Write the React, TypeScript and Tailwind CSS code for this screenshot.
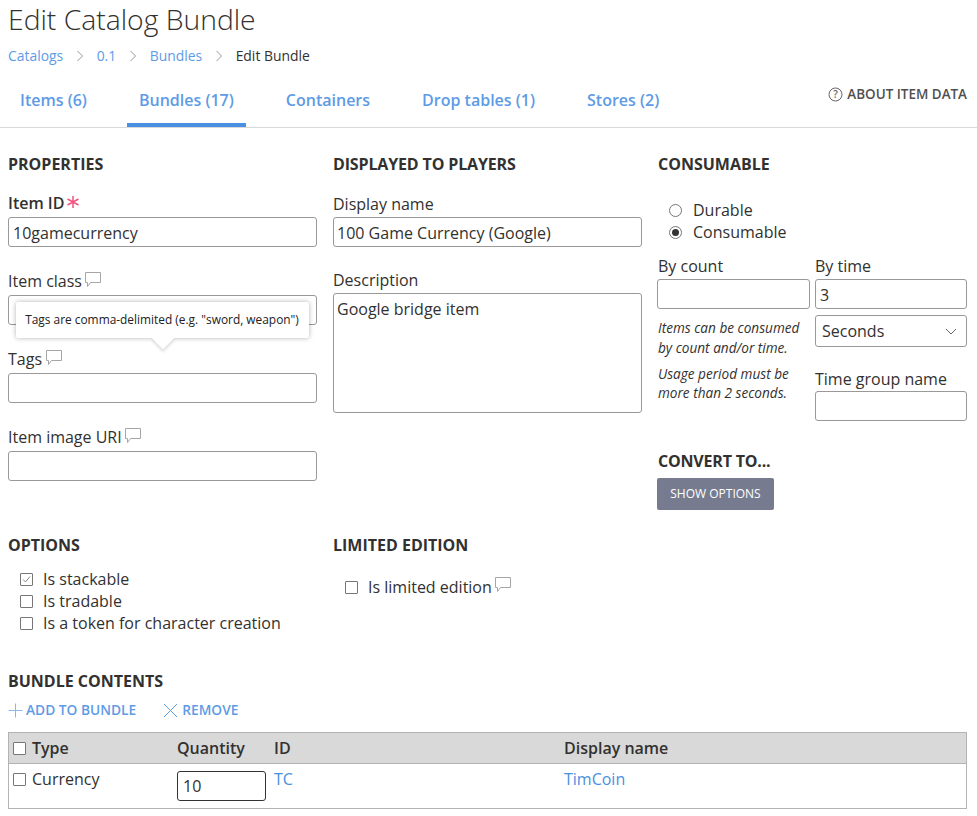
import React from "react";

const Bubble = () => (
  <svg width="17" height="16" viewBox="0 0 17 16" className="inline-block shrink-0" fill="none">
    <path d="M0.5 0.5 H15.5 V10.5 H5.5 L2.5 14.5 L2.5 10.5 H0.5 Z" stroke="#a6a6a6" strokeWidth="1" />
  </svg>
);

const Star = () => (
  <svg width="12" height="12" viewBox="0 0 12 12" className="shrink-0 -ml-[1px] mb-[3px]" fill="none">
    <path d="M6 0 V12 M0.5 3 L11.5 9 M11.5 3 L0.5 9" stroke="#f4547e" strokeWidth="1.5" />
  </svg>
);

const Box = ({ checked }: { checked?: boolean }) => (
  <span className="relative block w-[13px] h-[13px] border border-[#767676] rounded-[1px] bg-white shrink-0">
    {checked && (
      <svg width="11" height="11" viewBox="0 0 11 11" className="absolute left-0 top-0" fill="none">
        <path d="M2 5.5 L4.5 8 L9 2.5" stroke="#8a8a8a" strokeWidth="1" />
      </svg>
    )}
  </span>
);

const Radio = ({ checked }: { checked?: boolean }) => (
  <span className="flex items-center justify-center w-[13px] h-[13px] rounded-full border border-[#767676] bg-white shrink-0">
    {checked && <span className="block w-[7px] h-[7px] rounded-full bg-[#333]" />}
  </span>
);

const Input = ({ value, className = "" }: { value?: string; className?: string }) => (
  <div className={`h-[30px] border border-[#999] rounded-[3px] bg-white px-[4px] text-[16px] leading-[30px] text-[#323130] ${className}`}>
    {value}
  </div>
);

const Field = ({ label, value, icon, strong, star, inputClass, labelClass = "pb-[2px]" }: { label: string; value?: string; icon?: boolean; strong?: boolean; star?: boolean; inputClass?: string; labelClass?: string }) => (
  <div className="mb-[23px]">
    <div className={`h-[25px] flex items-center gap-[3.5px] text-[16px] leading-[21px] text-[#323130] ${labelClass} ${strong ? "font-semibold" : ""}`}>
      <span>{label}</span>
      {star && <Star />}
      {icon && <span className="mb-[4px] flex"><Bubble /></span>}
    </div>
    <Input value={value} className={inputClass} />
  </div>
);

const H = ({ children, className = "" }: { children: React.ReactNode; className?: string }) => (
  <h2 className={`text-[16px] leading-[22px] font-bold text-[#323130] ${className}`}>{children}</h2>
);

const Check = ({ label, checked, icon }: { label: string; checked?: boolean; icon?: boolean }) => (
  <div className="flex items-center h-[22px] text-[16px] text-[#323130]">
    <Box checked={checked} />
    <span className="ml-[10px]">{label}</span>
    {icon && <span className="ml-[3px] mb-[5px] flex"><Bubble /></span>}
  </div>
);

const Chevron = () => (
  <svg width="8" height="12" viewBox="0 0 8 12" className="mx-[12.75px]" fill="none">
    <path d="M1.5 1 L6.5 6 L1.5 11" stroke="#999" strokeWidth="1" />
  </svg>
);

const tabs = [
  { label: "Items (6)" },
  { label: "Bundles (17)", active: true },
  { label: "Containers" },
  { label: "Drop tables (1)" },
  { label: "Stores (2)" },
];

export default function App() {
  return (
    <div className="w-[977px] h-[816px] overflow-hidden bg-white text-[#323130]" style={{ fontFamily: '"Open Sans", sans-serif' }}>
      <div className="px-[8px]">
        <h1 className="text-[28.3px] leading-[38px] font-light h-[40px] text-[#323130]">Edit Catalog Bundle</h1>
        <nav className="flex items-center h-[30px] pt-[2px] text-[13.9px] text-[#323130]">
          <a className="text-[#5e9be6]">Catalogs</a>
          <Chevron />
          <a className="text-[#5e9be6]">0.1</a>
          <Chevron />
          <a className="text-[#5e9be6]">Bundles</a>
          <Chevron />
          <span>Edit Bundle</span>
        </nav>
      </div>

      <div className="relative flex h-[58px] border-b border-[#d9d9d9] pl-[8px]">
        <div className="flex gap-x-[28px]">
          {tabs.map((t) => (
            <div
              key={t.label}
              className={`h-[57px] px-[12px] pt-[18px] text-[16px] leading-[24px] font-semibold text-[#5e9be6] whitespace-nowrap ${t.active ? "border-b-4 border-[#4a90e2]" : ""}`}
            >
              {t.label}
            </div>
          ))}
        </div>
        <div className="absolute right-[10px] top-[14px] flex items-center gap-[4px] text-[13.45px] font-semibold text-[#505050]">
          <svg width="15" height="15" viewBox="0 0 15 15" fill="none">
            <circle cx="7.5" cy="7.5" r="6.5" stroke="#666" strokeWidth="1" />
            <text x="7.5" y="11" textAnchor="middle" fontSize="10" fill="#666">?</text>
          </svg>
          ABOUT ITEM DATA
        </div>
      </div>

      <div className="grid grid-cols-[309px_309px_309px] gap-x-[16px] px-[8px] pt-[25px]">
        <section className="relative">
          <H className="mb-[17px]">PROPERTIES</H>
          <Field label="Item ID" value="10gamecurrency" strong star />
          <Field label="Item class" icon />
          <Field label="Tags" icon />
          <Field label="Item image URI" icon />
          <div className="absolute left-[8px] top-[149px] w-[293px] h-[36px] bg-white rounded-[2px] shadow-[0_0_5px_rgba(0,0,0,0.3)] flex items-center justify-center text-[11.9px] text-[#222] whitespace-nowrap">
            <span className="relative z-10 -ml-[1px]">Tags are comma-delimited (e.g. "sword, weapon")</span>
            <span className="absolute left-[139px] bottom-[-8px] w-[16px] h-[16px] rotate-45 bg-white shadow-[2px_2px_3px_rgba(0,0,0,0.12)]" />
          </div>
        </section>

        <section>
          <H className="mb-[17px] tracking-[-0.15px]">DISPLAYED TO PLAYERS</H>
          <Field label="Display name" value="100 Game Currency (Google)" inputClass="pl-[3px]" labelClass="pb-[1px]" />
          <div className="h-[25px] -mt-[2px] pb-[2px] flex items-center text-[16px]">Description</div>
          <div className="h-[120px] border border-[#999] rounded-[3px] px-[3px] py-[3px] text-[16px] leading-[24px]">Google bridge item</div>
        </section>

        <section>
          <H className="mb-[24px]">CONSUMABLE</H>
          <div className="pl-[11px] mb-[10px]">
            <div className="flex items-center h-[22px] text-[16px]"><Radio /><span className="ml-[11px]">Durable</span></div>
            <div className="flex items-center h-[22px] text-[16px]"><Radio checked /><span className="ml-[11px]">Consumable</span></div>
          </div>
          <div className="grid grid-cols-[152px_152px] gap-x-[5px]">
            <div>
              <div className="h-[26px] flex items-center text-[16px]">By count</div>
              <Input className="-ml-[1px]" />
              <p className="mt-[9px] text-[13.6px] leading-[20px] italic whitespace-nowrap">Items can be consumed<br />by count and/or time.</p>
              <p className="mt-[6px] text-[13.6px] leading-[19px] italic whitespace-nowrap">Usage period must be<br />more than 2 seconds.</p>
            </div>
            <div>
              <div className="h-[26px] flex items-center text-[16px]">By time</div>
              <Input value="3" />
              <div className="mt-[6px] h-[32px] border border-[#999] rounded-[3px] pl-[6px] pr-[9px] flex items-center justify-between text-[16px]">
                Seconds
                <svg width="12" height="7" viewBox="0 0 12 7" fill="none"><path d="M1 1 L6 6 L11 1" stroke="#666" strokeWidth="1" /></svg>
              </div>
              <div className="h-[25px] mt-[19px] flex items-center text-[16px] whitespace-nowrap">Time group name</div>
              <Input />
            </div>
          </div>
          <H className="mt-[29px] mb-[6px] tracking-[-0.2px]">CONVERT TO...</H>
          <div className="-ml-[1px] w-[117px] h-[32px] rounded-[2px] bg-[#767b8f] flex items-center justify-center text-[12px] text-white">SHOW OPTIONS</div>
        </section>
      </div>

      <div className="grid grid-cols-[309px_309px] gap-x-[16px] px-[8px] mt-[24px]">
        <section>
          <H className="mb-[12px]">OPTIONS</H>
          <div className="pl-[12px]">
            <Check label="Is stackable" checked />
            <Check label="Is tradable" />
            <Check label="Is a token for character creation" />
          </div>
        </section>
        <section>
          <H className="mb-[20px]">LIMITED EDITION</H>
          <div className="pl-[12px]">
            <Check label="Is limited edition" icon />
          </div>
        </section>
      </div>

      <div className="px-[8px] mt-[36px]">
        <H>BUNDLE CONTENTS</H>
        <div className="flex items-center h-[20px] mt-[8px] text-[13.75px] font-semibold text-[#5e9be6]">
          <svg width="15" height="15" viewBox="0 0 15 15" className="mr-[3px]" fill="none"><path d="M7.5 0.5 V14.5 M0.5 7.5 H14.5" stroke="#8fb6ea" strokeWidth="1" /></svg>
          ADD TO BUNDLE
          <svg width="15" height="15" viewBox="0 0 15 15" className="ml-[27px] mr-[4px]" fill="none"><path d="M1 1 L14 14 M14 1 L1 14" stroke="#5e9be6" strokeWidth="1" /></svg>
          REMOVE
        </div>
        <div className="mt-[12px] w-[959px] h-[77px] border border-[#b3b3b3] text-[16px]">
          <div className="grid grid-cols-[168px_97px_290px_1fr] h-[31px] items-center bg-[#d9d9d9] border-b border-[#b3b3b3] font-semibold">
            <div className="flex items-center pl-[4px]"><Box /><span className="ml-[6px]">Type</span></div>
            <div>Quantity</div>
            <div>ID</div>
            <div>Display name</div>
          </div>
          <div className="grid grid-cols-[168px_97px_290px_1fr] pt-[4px]">
            <div className="flex items-center h-[22px] pl-[4px]"><Box /><span className="ml-[6px]">Currency</span></div>
            <div className="pt-[3px]"><div className="w-[89px] h-[30px] border border-[#333] rounded-[3px] px-[5px] leading-[28px]">10</div></div>
            <div className="text-[#4a90e2] leading-[22px]">TC</div>
            <div className="text-[#4a90e2] leading-[22px]">TimCoin</div>
          </div>
        </div>
      </div>
    </div>
  );
}
